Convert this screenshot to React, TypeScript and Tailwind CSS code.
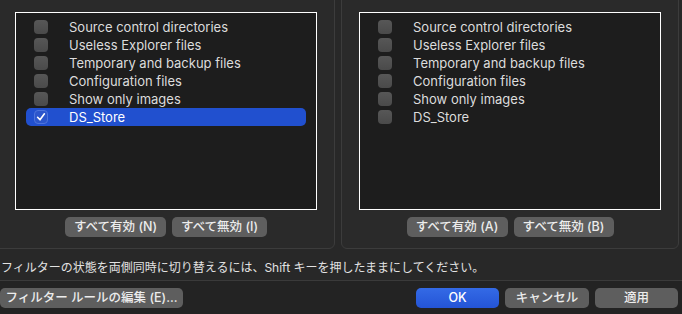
import React from "react";

const items = [
  "Source control directories",
  "Useless Explorer files",
  "Temporary and backup files",
  "Configuration files",
  "Show only images",
  "DS_Store",
];

const font = { fontFamily: '"Inter", "Noto Sans CJK JP", sans-serif' };

const Check = ({ on }: { on: boolean }) =>
  on ? (
    <span className="flex h-[14px] w-[14px] items-center justify-center rounded-[4px] border border-[#4d74dc] bg-[#2c56cc]">
      <svg width="10" height="10" viewBox="0 0 10 10">
        <path d="M1.6 5.3 L4 7.8 L8.4 1.8" fill="none" stroke="#fff" strokeWidth="1.6" strokeLinecap="round" strokeLinejoin="round" />
      </svg>
    </span>
  ) : (
    <span className="block h-[14px] w-[14px] rounded-[4px] bg-gradient-to-b from-[#575757] to-[#4a4a4a]" />
  );

// リスト（白枠）
const FilterList = ({ checked }: { checked: number }) => (
  <div className="h-[198px] w-[302px] border border-white bg-[#1d1d1d] px-[10px] pt-[5px]">
    {items.map((t, i) => (
      <div
        key={t}
        className={`flex h-[18px] items-center rounded-[5px] pl-[8px] ${i === checked ? "bg-[#2150cf]" : ""}`}
      >
        <Check on={i === checked} />
        <span className={`ml-[21px] text-[13px] leading-none ${i === checked ? "text-white" : "text-[#dcdcdc]"}`}>{t}</span>
      </div>
    ))}
  </div>
);

const Btn = ({ label, w }: { label: string; w: string }) => (
  <button className={`${w} h-[20px] rounded-[5px] bg-[#5e5e5e] text-[12.5px] font-medium leading-none text-[#ececec]`}>{label}</button>
);

export default function App() {
  return (
    <div className="flex h-[314px] w-[682px] flex-col overflow-hidden bg-[#282828]" style={font}>
      {/* 左右のグループ */}
      <div className="-mt-[10px] flex h-[259px] gap-[6px]">
        <div className="-ml-[10px] flex w-[345px] flex-col items-start rounded-[6px] border border-[#3c3c3c] bg-[#2a2a2a] pl-[24px] pt-[21px]">
          <FilterList checked={5} />
          <div className="mt-[7px] flex w-[302px] justify-center gap-[6px]">
            <Btn label="すべて有効 (N)" w="w-[101px]" />
            <Btn label="すべて無効 (I)" w="w-[95px]" />
          </div>
        </div>
        <div className="flex w-[338px] flex-col items-start rounded-[6px] border border-[#3c3c3c] bg-[#2a2a2a] pl-[17px] pt-[21px]">
          <FilterList checked={-1} />
          <div className="mt-[7px] flex w-[302px] justify-center gap-[6px]">
            <Btn label="すべて有効 (A)" w="w-[101px]" />
            <Btn label="すべて無効 (B)" w="w-[100px]" />
          </div>
        </div>
      </div>

      <div className="flex h-[31px] items-center pl-[1px] pt-[6px] text-[12px] text-[#e2e2e2]">
        フィルターの状態を両側同時に切り替えるには、Shift キーを押したままにしてください。
      </div>

      <div className="flex flex-1 items-start border-t border-[#3a3a3a] bg-[#232323] pt-[7px]">
        <button className="h-[20px] w-[183px] rounded-[5px] bg-[#5e5e5e] text-[12.5px] font-medium leading-none text-[#ececec]">
          フィルター ルールの編集 (E)...
        </button>
        <div className="ml-auto flex gap-[6px] pr-[4px]">
          <button className="h-[20px] w-[83px] rounded-[5px] bg-gradient-to-b from-[#346ae6] to-[#2454d6] text-[12.5px] font-medium leading-none text-white">
            OK
          </button>
          <button className="h-[20px] w-[84px] rounded-[5px] bg-[#5e5e5e] text-[12.5px] font-medium leading-none text-[#ececec]">
            キャンセル
          </button>
          <button className="h-[20px] w-[83px] rounded-[5px] bg-[#5e5e5e] text-[12.5px] font-medium leading-none text-[#ececec]">
            適用
          </button>
        </div>
      </div>
    </div>
  );
}
